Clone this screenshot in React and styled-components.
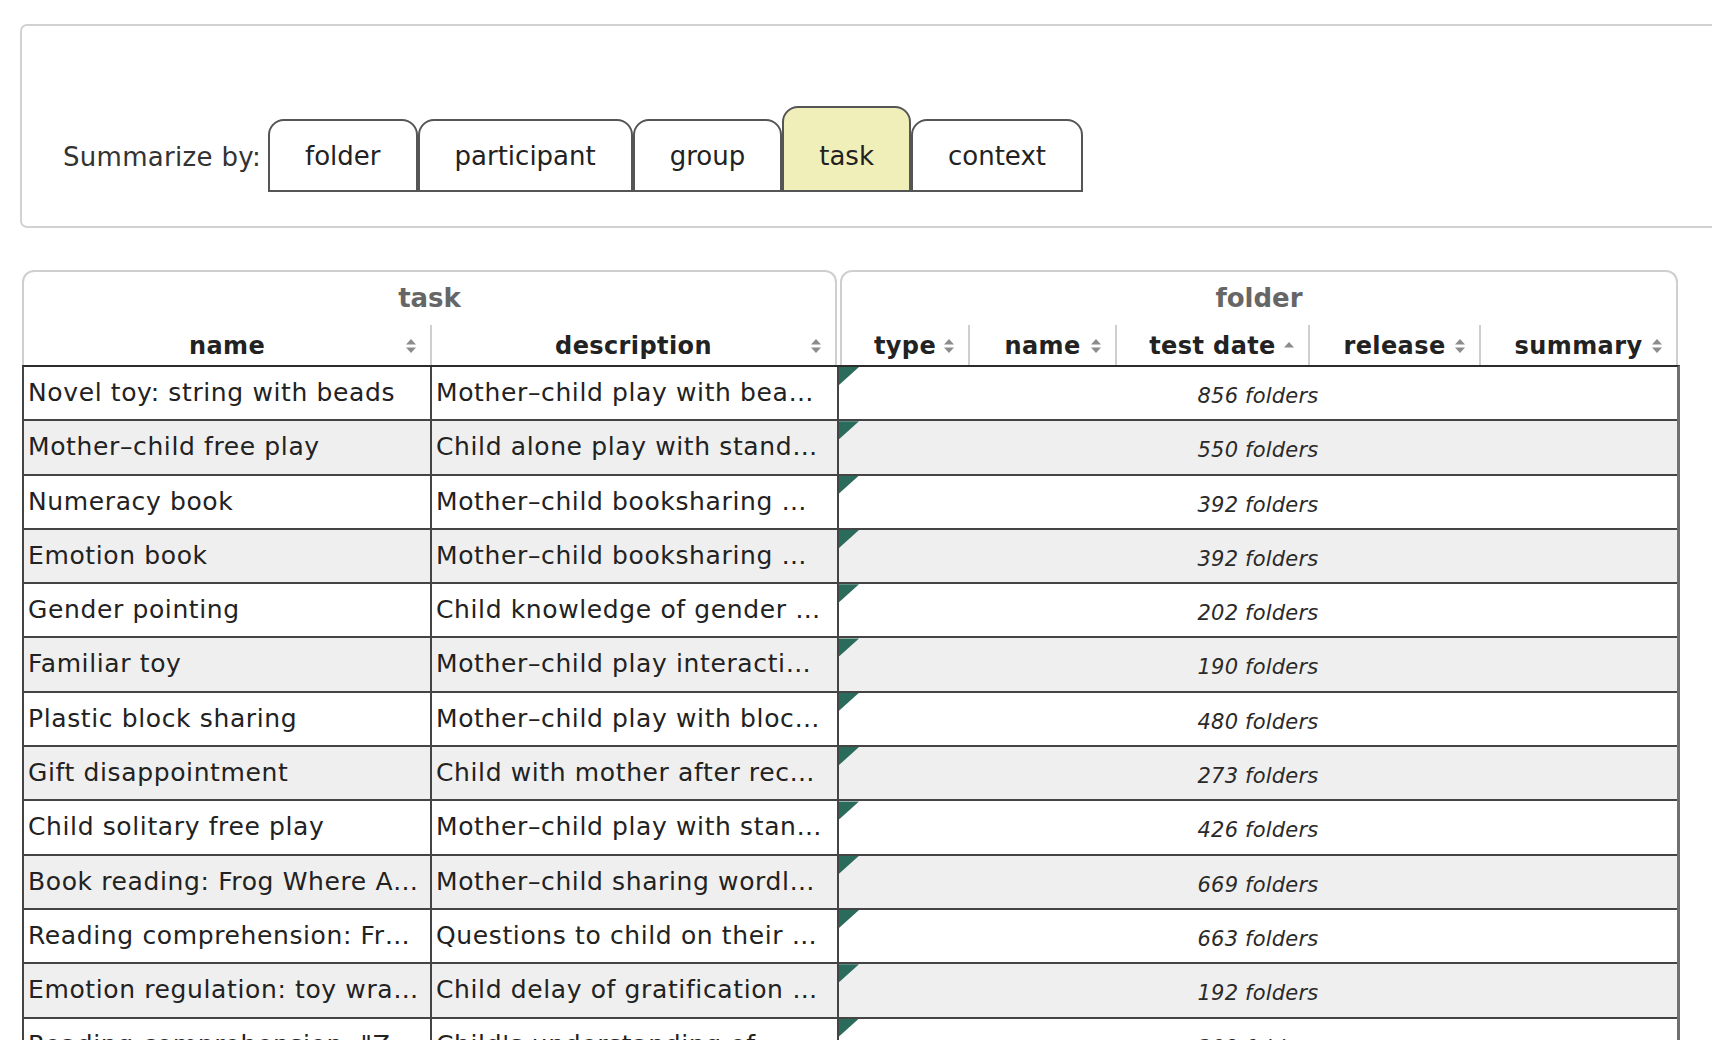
import React from "react";
import styled, { createGlobalStyle } from "styled-components";

const Global = createGlobalStyle`
  html, body {
    margin: 0;
    padding: 0;
    background: #ffffff;
    overflow: hidden;
  }
  body {
    font-family: "DejaVu Sans", "Liberation Sans", sans-serif;
    color: #222;
  }
`;

const Page = styled.div`
  width: 1712px;
  height: 1040px;
  overflow: hidden;
  padding-top: 24px;
  box-sizing: border-box;
`;

const Panel = styled.div`
  margin-left: 20px;
  width: 1760px;
  height: 204px;
  box-sizing: border-box;
  border: 2px solid #d2d2d2;
  border-radius: 7px;
  display: flex;
  align-items: flex-end;
  padding: 0 0 34px 41px;
`;

const Label = styled.div`
  font-size: 26px;
  letter-spacing: 0.3px;
  color: #333;
  line-height: 36px;
  margin-right: 7px;
  padding-bottom: 17px;
`;

const Tabs = styled.div`
  display: flex;
  align-items: flex-end;
  gap: 0;
`;

const Tab = styled.div`
  box-sizing: border-box;
  height: ${(p) => (p.$active ? 86 : 73)}px;
  padding: 0 35px 16px;
  border: 2px solid #555;
  border-radius: 16px 16px 0 0;
  background: ${(p) => (p.$active ? "#f1efb9" : "#ffffff")};
  font-size: 26px;
  line-height: 36px;
  color: #222;
  display: flex;
  align-items: flex-end;
`;

const Table = styled.div`
  margin: 42px 0 0 22px;
  width: 1658px;
`;

const GroupRow = styled.div`
  display: flex;
  gap: 3px;
`;

const GroupBox = styled.div`
  box-sizing: border-box;
  width: ${(p) => p.$w}px;
  border: 2px solid #cfcfcf;
  border-bottom: none;
  border-radius: 12px 12px 0 0;
`;

const GroupTitle = styled.div`
  height: 53px;
  line-height: 52px;
  text-align: center;
  font-size: 26px;
  font-weight: bold;
  color: #666;
`;

const HeadRow = styled.div`
  display: flex;
  height: 40px;
`;

const HeadCell = styled.div`
  position: relative;
  box-sizing: border-box;
  width: ${(p) => p.$w}px;
  border-left: ${(p) => (p.$first ? "none" : "2px solid #cfcfcf")};
  font-size: 24px;
  letter-spacing: 0.4px;
  font-weight: bold;
  color: #222;
  line-height: 42px;
  text-align: center;
`;

const SortIcon = styled.svg`
  position: absolute;
  right: 13px;
  top: 13px;
  width: 12px;
  height: 16px;
`;

const Body = styled.div`
  border-top: 2px solid #2c2c2c;
  border-left: 2px solid #444;
  border-right: 3px solid #707070;
`;

const Row = styled.div`
  display: grid;
  grid-template-columns: 406px 407px 1fr;
  height: 54.3px;
  box-sizing: border-box;
  border-bottom: 2px solid #444;
  background: ${(p) => (p.$alt ? "#efefef" : "#ffffff")};
`;

const TextCell = styled.div`
  box-sizing: border-box;
  border-left: ${(p) => (p.$first ? "none" : "2px solid #444")};
  padding: 0 2px 0 4px;
  font-size: 25px;
  letter-spacing: 0.62px;
  line-height: 52px;
  color: #222;
  white-space: nowrap;
  overflow: hidden;
  text-overflow: ellipsis;
`;

const FolderCell = styled.div`
  position: relative;
  border-left: 2px solid #444;
  padding-top: 4px;
  font-size: 21px;
  letter-spacing: 0.2px;
  font-style: italic;
  line-height: 50px;
  color: #2a2a2a;
  text-align: center;
`;

const Corner = styled.span`
  position: absolute;
  left: 0;
  top: 0;
  width: 20px;
  height: 18px;
  background: #2b6b5b;
  clip-path: polygon(0 0, 100% 0, 0 100%);
`;

const Sort = ({ up }) =>
  up ? (
    <SortIcon viewBox="0 0 12 16">
      <polygon points="1,9.5 6,4 11,9.5" fill="#8c8c8c" />
    </SortIcon>
  ) : (
    <SortIcon viewBox="0 0 12 16">
      <polygon points="1,6.5 6,1 11,6.5" fill="#8c8c8c" />
      <polygon points="1,9.5 11,9.5 6,15" fill="#8c8c8c" />
    </SortIcon>
  );

const rows = [
  ["Novel toy: string with beads", "Mother–child play with bea…", "856 folders"],
  ["Mother–child free play", "Child alone play with stand…", "550 folders"],
  ["Numeracy book", "Mother–child booksharing …", "392 folders"],
  ["Emotion book", "Mother–child booksharing …", "392 folders"],
  ["Gender pointing", "Child knowledge of gender …", "202 folders"],
  ["Familiar toy", "Mother–child play interacti…", "190 folders"],
  ["Plastic block sharing", "Mother–child play with bloc…", "480 folders"],
  ["Gift disappointment", "Child with mother after rec…", "273 folders"],
  ["Child solitary free play", "Mother–child play with stan…", "426 folders"],
  ["Book reading: Frog Where A…", "Mother–child sharing wordl…", "669 folders"],
  ["Reading comprehension: Fr…", "Questions to child on their …", "663 folders"],
  ["Emotion regulation: toy wra…", "Child delay of gratification …", "192 folders"],
  ["Reading comprehension: \"Z…", "Child's understanding of …", "309 folders"],
];

const tabs = ["folder", "participant", "group", "task", "context"];

export default function App() {
  return (
    <Page>
      <Global />
      <Panel>
        <Label>Summarize by:</Label>
        <Tabs>
          {tabs.map((t) => (
            <Tab key={t} $active={t === "task"}>
              {t}
            </Tab>
          ))}
        </Tabs>
      </Panel>
      <Table>
        <GroupRow>
          <GroupBox $w={815}>
            <GroupTitle>task</GroupTitle>
            <HeadRow>
              <HeadCell $w={406} $first>
                name
                <Sort />
              </HeadCell>
              <HeadCell $w={405}>
                description
                <Sort />
              </HeadCell>
            </HeadRow>
          </GroupBox>
          <GroupBox $w={838}>
            <GroupTitle>folder</GroupTitle>
            <HeadRow>
              <HeadCell $w={126} $first>
                type
                <Sort />
              </HeadCell>
              <HeadCell $w={147}>
                name
                <Sort />
              </HeadCell>
              <HeadCell $w={193}>
                test date
                <Sort up />
              </HeadCell>
              <HeadCell $w={171}>
                release
                <Sort />
              </HeadCell>
              <HeadCell $w={197}>
                summary
                <Sort />
              </HeadCell>
            </HeadRow>
          </GroupBox>
        </GroupRow>
        <Body>
          {rows.map((r, i) => (
            <Row key={i} $alt={i % 2 === 1}>
              <TextCell $first>{r[0]}</TextCell>
              <TextCell>{r[1]}</TextCell>
              <FolderCell>
                <Corner />
                {r[2]}
              </FolderCell>
            </Row>
          ))}
        </Body>
      </Table>
    </Page>
  );
}
